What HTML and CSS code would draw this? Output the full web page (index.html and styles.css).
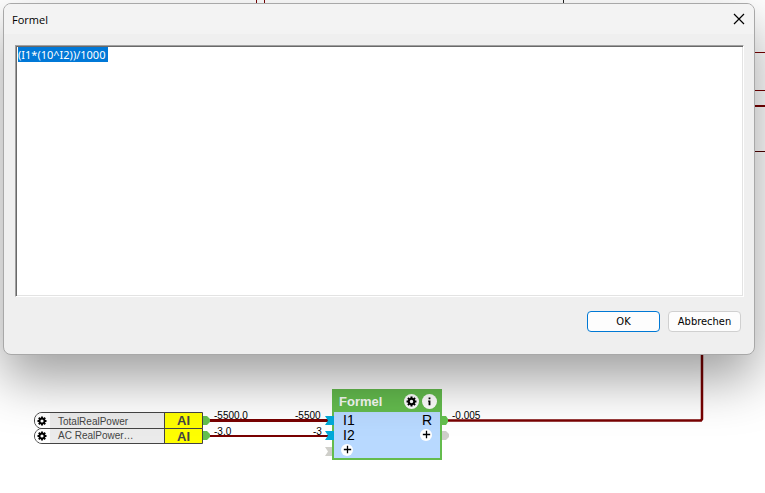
FILE: index.html
```html
<!DOCTYPE html>
<html lang="de">
<head>
  <meta charset="UTF-8">
  <meta name="viewport" content="width=device-width, initial-scale=1.0">
  <title>Formel</title>
  <link rel="stylesheet" href="styles.css">
</head>
<body>
  <svg class="icon-defs" aria-hidden="true">
    <symbol id="icon-gear" viewBox="0 0 12 12">
      <circle cx="6" cy="6" r="3" fill="none" stroke="currentColor" stroke-width="2.2"/>
      <path d="M6 .6v1.8M6 9.6v1.8M.6 6h1.8M9.6 6h1.8M2.1 2.1l1.3 1.3M8.6 8.6l1.3 1.3M2.1 9.9l1.3-1.3M8.6 3.4l1.3-1.3" stroke="currentColor" stroke-width="2.2"/>
    </symbol>
    <symbol id="icon-info" viewBox="0 0 12 12">
      <path d="M5 1.5h2v2H5zM4.5 5H7v5H5V6.4h-.5z" fill="currentColor"/>
    </symbol>
    <symbol id="icon-plus" viewBox="0 0 12 12">
      <path d="M6 2v8M2 6h8" stroke="currentColor" stroke-width="1.4"/>
    </symbol>
  </svg>

  <main class="canvas">
    <!-- wires and ports -->
    <svg class="wires" aria-hidden="true">
      <g fill="none" stroke="#780000">
        <path d="M256.500 0V5M264.500 0V5"/>
        <path d="M563.500 0V5" stroke="#222"/>
        <path d="M750 52.500H4000M750 90.500H4000"/>
        <path d="M750 106H4000" stroke-width="2"/>
        <path d="M750 151.500H4000" stroke="#500000"/>
        <path d="M210 420.500H330" stroke-width="3"/>
        <path d="M210 436H330" stroke-width="2"/>
        <path d="M448 420.500H701L702 419V350" stroke-width="2.500"/>
      </g>
      <g fill="#64c04e">
        <path d="M203 416h4l3 3v3l-3 3h-4z"/>
        <path d="M203 431h4l3 3v3l-3 3h-4z"/>
        <path d="M441 416h5l2 3v3l-2 3h-5z"/>
      </g>
      <path d="M441 431h5l3 3v3l-3 3h-5z" fill="#cfcfca"/>
    </svg>

    <div class="sensor sensor-total">
      <button class="sensor-gear" aria-label="Einstellungen"><svg><use href="#icon-gear"/></svg></button>
      <span class="sensor-name">TotalRealPower</span>
      <span class="sensor-type">AI</span>
    </div>
    <div class="sensor sensor-ac">
      <button class="sensor-gear" aria-label="Einstellungen"><svg><use href="#icon-gear"/></svg></button>
      <span class="sensor-name">AC RealPower…</span>
      <span class="sensor-type">AI</span>
    </div>

    <span class="value value-total">-5500.0</span>
    <span class="value value-ac">-3.0</span>
    <span class="value value-i1">-5500</span>
    <span class="value value-i2">-3</span>
    <span class="value value-result">-0.005</span>

    <section class="block">
      <header class="block-header">
        <h2>Formel</h2>
        <button class="round" aria-label="Einstellungen"><svg><use href="#icon-gear"/></svg></button>
        <button class="round" aria-label="Info"><svg><use href="#icon-info"/></svg></button>
      </header>
      <div class="block-body">
        <div class="block-row"><span>I1</span><span>R</span></div>
        <div class="block-row">
          <span>I2</span>
          <button class="round round-small" aria-label="Ausgang"><svg><use href="#icon-plus"/></svg></button>
        </div>
        <div class="block-row block-row-add">
          <button class="round round-small" aria-label="Eingang"><svg><use href="#icon-plus"/></svg></button>
        </div>
      </div>
    </section>

    <svg class="wires" aria-hidden="true">
      <path d="M325 416h9v9h-9l3-4.500z" fill="#00a9d8"/>
      <path d="M325 431h9v9h-9l3-4.500z" fill="#00a9d8"/>
      <path d="M325 447h7v9h-7l3-4.500z" fill="#cfcfca"/>
    </svg>
  </main>

  <form class="dialog" role="dialog" aria-labelledby="dialog-title">
    <header class="dialog-header">
      <label id="dialog-title" for="formula">Formel</label>
      <button type="button" class="close" aria-label="Schließen">
        <svg viewBox="0 0 12 12"><path d="M1 1l10 10M11 1L1 11" stroke="currentColor" stroke-width="1.200"/></svg>
      </button>
    </header>
    <textarea id="formula" class="formula" spellcheck="false">(I1*(10^I2))/1000 </textarea>
    <footer class="dialog-footer">
      <button type="submit" class="btn btn-default">OK</button>
      <button type="button" class="btn">Abbrechen</button>
    </footer>
  </form>

  <script>
    const formula = document.getElementById('formula');
    formula.focus();
    formula.select();

    document.querySelector('.dialog').addEventListener('submit', (event) => {
      event.preventDefault();
    });
  </script>
</body>
</html>
```
FILE: styles.css
```css
* {
  box-sizing: border-box;
}
body {
  margin: 0;
  background-color: #fff;
  color: #000;
  font-family: "Liberation Sans", Arial, sans-serif;
  font-size: 10px;
  overflow: hidden;
}
button {
  padding: 0;
  border: none;
  background: none;
  color: #000;
  font: inherit;
}
.icon-defs {
  display: none;
}

/* canvas */
.canvas {
  position: relative;
  min-height: 100vh;
}
.wires {
  position: absolute;
  inset: 0;
  width: 100%;
  height: 100%;
  pointer-events: none;
}
.sensor {
  position: absolute;
  left: 34px;
  display: flex;
  height: 17px;
  border: 1px solid #444;
  border-radius: 8px 0 0 8px;
  background-color: #ebebeb;
  color: #444;
  overflow: hidden;
}
.sensor-total {
  top: 412px;
}
.sensor-ac {
  top: 428px;
  height: 16px;
}
.sensor-gear {
  display: flex;
  align-items: center;
  padding: 0 3px 0 2px;
  background-color: #fff;
}
.sensor-gear svg {
  width: 10px;
  height: 10px;
}
.sensor-name {
  width: 114px;
  padding-left: 8px;
  line-height: 17px;
}
.sensor-ac .sensor-name {
  line-height: 13px;
}
.sensor-type {
  width: 38px;
  border-left: 1px solid #444;
  background-color: #ff0;
  font-size: 13px;
  font-weight: bold;
  line-height: 16px;
  text-align: center;
}
.value {
  position: absolute;
  line-height: 12px;
}
.value-total {
  left: 214px;
  top: 410px;
}
.value-ac {
  left: 214px;
  top: 426px;
}
.value-i1 {
  left: 295px;
  top: 410px;
}
.value-i2 {
  left: 313px;
  top: 426px;
}
.value-result {
  left: 452px;
  top: 410px;
}

/* function block */
.block {
  position: absolute;
  left: 332px;
  top: 389px;
  width: 110px;
  border: 2px solid #64bc4e;
  background-color: #b8d9ff;
}
.block-header {
  display: flex;
  align-items: center;
  gap: 3px;
  height: 21px;
  padding: 0 3px 0 5px;
  background-color: #64bc4e;
}
.block-header h2 {
  flex: 1;
  margin: 0;
  color: #f8fcf6;
  font-size: 13px;
}
.round {
  display: flex;
  align-items: center;
  justify-content: center;
  width: 15px;
  height: 15px;
  border-radius: 50%;
  background-color: #fff;
}
.round svg {
  width: 11px;
  height: 11px;
}
.round-small {
  width: 12px;
  height: 12px;
}
.block-row {
  display: flex;
  align-items: center;
  justify-content: space-between;
  height: 15px;
  padding: 0 8px 0 9px;
  font-size: 14px;
}
.block-body {
  padding-bottom: 1px;
}
.block-row-add {
  padding-left: 7px;
}

/* dialog */
.dialog {
  position: absolute;
  inset: 3px 10px auto 3px;
  display: flex;
  flex-direction: column;
  border: 1px solid #a8a8a8;
  border-radius: 8px;
  background-color: #efefef;
  box-shadow: 0 24px 52px rgba(0, 0, 0, 0.38);
  font-family: "DejaVu Sans Condensed", "Noto Sans", sans-serif;
  font-size: 11px;
  overflow: hidden;
}
.dialog-header {
  display: flex;
  align-items: center;
  justify-content: space-between;
  height: 30px;
  padding: 0 9px 0 8px;
  background-color: #f3f3f3;
  font-family: "Open Sans", sans-serif;
}
.close {
  display: flex;
}
.close svg {
  width: 12px;
  height: 12px;
}
.formula {
  height: 252px;
  margin: 11px 10px 0 11px;
  padding: 1px;
  border: 1px solid;
  border-color: #a0a0a0 #fff #fff #a0a0a0;
  border-radius: 0;
  outline: none;
  resize: none;
  background-color: #fff;
  box-shadow: inset 1px 1px #696969, inset -1px -1px #e3e3e3;
  padding: 2px;
  font: 11px/13px "Noto Sans", sans-serif;
}
.formula::selection {
  background-color: #0078d7;
  color: #fff;
}
.dialog-footer {
  display: flex;
  justify-content: flex-end;
  gap: 8px;
  padding: 14px 13px 22px;
}
.btn {
  width: 73px;
  height: 21px;
  border: 1px solid #d0d0d0;
  border-radius: 4px;
  background-color: #fdfdfd;
}
.btn-default {
  border-color: #0078d4;
}
```
